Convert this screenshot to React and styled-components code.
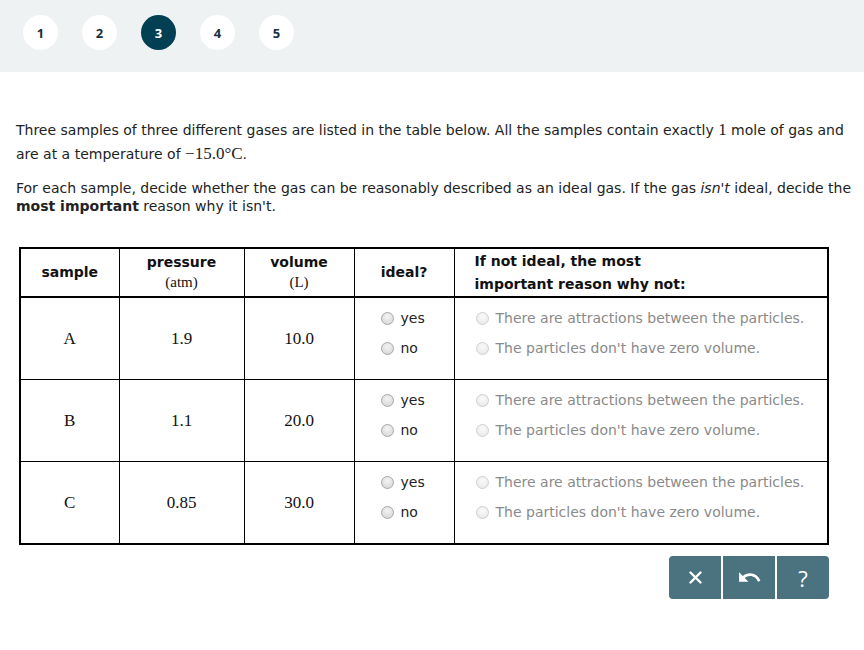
import React from 'react';
import styled, { createGlobalStyle } from 'styled-components';
import { MdUndo } from 'react-icons/md';

const GlobalStyle = createGlobalStyle`
  body {
    margin: 0;
    background: #ffffff;
    font-family: "DejaVu Sans", Verdana, sans-serif;
    color: #222222;
  }
`;

const steps = [1, 2, 3, 4, 5];

const samples = [
  { name: 'A', pressure: '1.9', volume: '10.0' },
  { name: 'B', pressure: '1.1', volume: '20.0' },
  { name: 'C', pressure: '0.85', volume: '30.0' },
];

const App = () => {
  return (
    <>
      <GlobalStyle />
      <StepBar>
        {steps.map((n) => (
          <StepCircle key={n} active={n === 3}>{n}</StepCircle>
        ))}
      </StepBar>

      <Content>
        <Prompt>
          Three samples of three different gases are listed in the table below. All the samples contain exactly <Math>1</Math> mole of gas and are at a temperature of <Math>−15.0°C</Math>.
        </Prompt>
        <Instruction>
          For each sample, decide whether the gas can be reasonably described as an ideal gas. If the gas <em>isn't</em> ideal, decide the <strong>most important</strong> reason why it isn't.
        </Instruction>

        <GasTable>
          <colgroup>
            <col style={{ width: 99 }} />
            <col style={{ width: 125 }} />
            <col style={{ width: 110 }} />
            <col style={{ width: 100 }} />
            <col />
          </colgroup>
          <thead>
            <tr>
              <HeadCell>sample</HeadCell>
              <HeadCell>
                pressure
                <Unit>(atm)</Unit>
              </HeadCell>
              <HeadCell>
                volume
                <Unit>(L)</Unit>
              </HeadCell>
              <HeadCell>ideal?</HeadCell>
              <HeadCell left>
                If not ideal, the most<br />important reason why not:
              </HeadCell>
            </tr>
          </thead>
          <tbody>
            {samples.map((s) => (
              <tr key={s.name}>
                <ValueCell>{s.name}</ValueCell>
                <ValueCell>{s.pressure}</ValueCell>
                <ValueCell>{s.volume}</ValueCell>
                <ChoiceCell>
                  <Option><Radio /> yes</Option>
                  <Option><Radio /> no</Option>
                </ChoiceCell>
                <ReasonCell>
                  <Option disabled><Radio disabled /> There are attractions between the particles.</Option>
                  <Option disabled><Radio disabled /> The particles don't have zero volume.</Option>
                </ReasonCell>
              </tr>
            ))}
          </tbody>
        </GasTable>

        <ActionRow>
          <ButtonGroup>
            <ActionButton aria-label="clear">
              <svg width="13" height="13" viewBox="0 0 13 13">
                <path d="M1.5 1.5 L11.5 11.5 M11.5 1.5 L1.5 11.5" stroke="#fff" strokeWidth="2.4" strokeLinecap="round" />
              </svg>
            </ActionButton>
            <ActionButton aria-label="undo">
              <MdUndo size={25} />
            </ActionButton>
            <ActionButton aria-label="help">?</ActionButton>
          </ButtonGroup>
        </ActionRow>
      </Content>
    </>
  );
};

const StepBar = styled.div`
  height: 72px;
  background: #eef2f3;
  display: flex;
  align-items: flex-start;
  gap: 24px;
  padding: 15px 0 0 23px;
  box-sizing: border-box;
`;

const StepCircle = styled.div`
  width: 35px;
  height: 35px;
  border-radius: 50%;
  background: ${(p) => (p.active ? '#013f52' : '#ffffff')};
  color: ${(p) => (p.active ? '#ffffff' : '#17303d')};
  display: flex;
  align-items: center;
  justify-content: center;
  font-family: "Open Sans", "DejaVu Sans", sans-serif;
  font-weight: 700;
  font-size: 13px;
`;

const Content = styled.div`
  padding: 0 6px 0 16px;
`;

const Prompt = styled.p`
  margin: 46px 0 0;
  font-size: 14px;
  line-height: 24px;
`;

const Math = styled.span`
  font-family: "Liberation Serif", "Times New Roman", serif;
  font-size: 17px;
  line-height: 1;
`;

const Instruction = styled.p`
  margin: 13px 0 0;
  font-size: 14px;
  line-height: 18px;
`;

const GasTable = styled.table`
  margin: 32px 0 0 3px;
  width: 810px;
  border-collapse: collapse;
  border: 2px solid #000;
  table-layout: fixed;
`;

const HeadCell = styled.th`
  height: 41px;
  border: 1px solid #000;
  border-bottom: 2px solid #000;
  padding: ${(p) => (p.left ? '1px 0 0 20px' : '0')};
  text-align: ${(p) => (p.left ? 'left' : 'center')};
  font-size: 14px;
  font-weight: 700;
  line-height: ${(p) => (p.left ? '23px' : '19px')};
  color: #111;
`;

const Unit = styled.div`
  font-family: "Liberation Serif", "Times New Roman", serif;
  font-weight: 400;
  font-size: 15px;
  line-height: 20px;
`;

const ValueCell = styled.td`
  height: 81px;
  border: 1px solid #000;
  text-align: center;
  vertical-align: middle;
  padding: 0;
  font-family: "Liberation Serif", "Times New Roman", serif;
  font-size: 17px;
  color: #111;
`;

const ChoiceCell = styled.td`
  border: 1px solid #000;
  vertical-align: top;
  padding: 5px 0 0 26px;
`;

const ReasonCell = styled.td`
  border: 1px solid #000;
  vertical-align: top;
  padding: 5px 0 0 21px;
`;

const Option = styled.div`
  display: flex;
  align-items: center;
  gap: 7px;
  height: 30px;
  font-size: 14px;
  color: ${(p) => (p.disabled ? '#8a8a8a' : '#222')};
`;

const Radio = styled.span`
  display: inline-block;
  width: 11px;
  height: 11px;
  border-radius: 50%;
  border: 1px solid ${(p) => (p.disabled ? '#d0d0d0' : '#a9a9a9')};
  background: ${(p) =>
    p.disabled
      ? 'radial-gradient(circle at 50% 35%, #fafafa, #e6e6e6)'
      : 'radial-gradient(circle at 50% 35%, #f4f4f4, #d2d2d2)'};
  flex: none;
`;

const ActionRow = styled.div`
  display: flex;
  justify-content: flex-end;
  width: 813px;
  margin-top: 11px;
`;

const ButtonGroup = styled.div`
  display: flex;
  gap: 2px;
  border-radius: 4px;
  overflow: hidden;
`;

const ActionButton = styled.button`
  width: 52px;
  height: 43px;
  border: none;
  background: #4b727f;
  color: #fff;
  display: flex;
  align-items: center;
  justify-content: center;
  font-family: "Open Sans", "DejaVu Sans", sans-serif;
  font-size: 22px;
  padding: 0;
  cursor: pointer;
`;

export default App;
